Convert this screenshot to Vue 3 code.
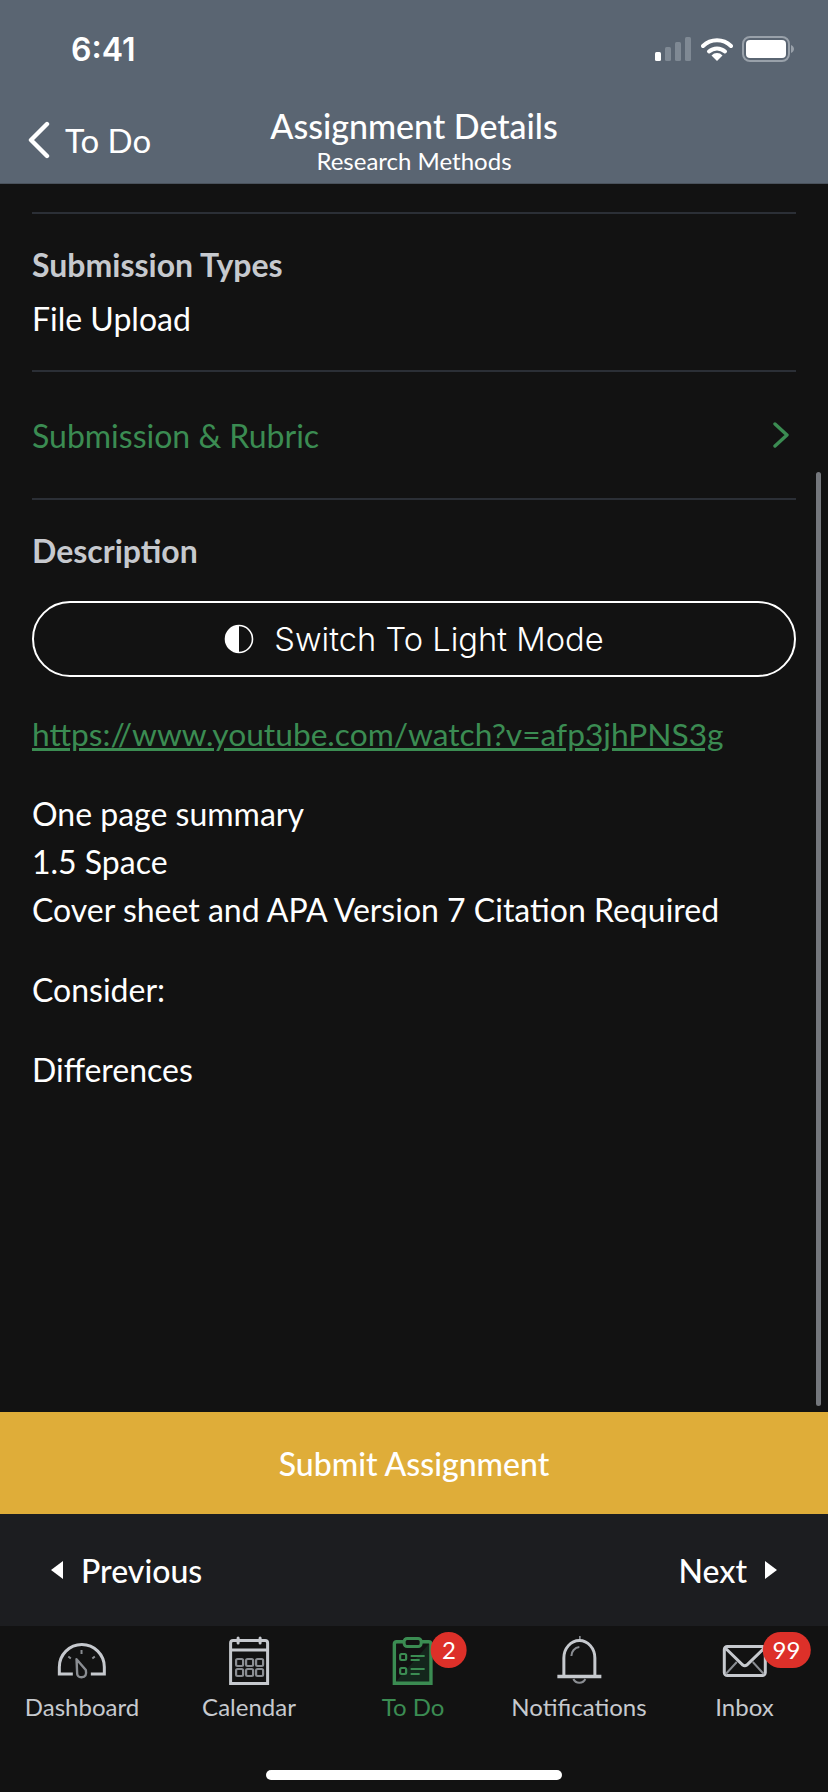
<template>
  <div class="screen">
    <header class="top">
      <div class="status">
        <span class="time">6:41</span>
        <div class="status-icons">
          <svg width="38" height="24" viewBox="0 0 38 24">
            <rect x="1" y="15" width="6" height="9" rx="1.5" fill="#fff"/>
            <rect x="11" y="10" width="6" height="14" rx="1.5" fill="#7f8994"/>
            <rect x="21" y="5" width="6" height="19" rx="1.5" fill="#7f8994"/>
            <rect x="31" y="0" width="6" height="24" rx="1.5" fill="#7f8994"/>
          </svg>
          <svg width="32" height="24" viewBox="0 0 32 24">
            <path d="M2 9 A20 20 0 0 1 30 9" fill="none" stroke="#fff" stroke-width="4" stroke-linecap="round"/>
            <path d="M8 14.5 A12 12 0 0 1 24 14.5" fill="none" stroke="#fff" stroke-width="4" stroke-linecap="round"/>
            <path d="M16 24 L10.5 18.5 A7.5 7.5 0 0 1 21.5 18.5 Z" fill="#fff"/>
          </svg>
          <svg width="52" height="26" viewBox="0 0 52 26">
            <rect x="1" y="1" width="46" height="24" rx="7" fill="none" stroke="#99a1aa" stroke-width="2"/>
            <rect x="4" y="4" width="40" height="18" rx="4" fill="#fff"/>
            <path d="M49 9 C51 10 52 11.5 52 13 C52 14.5 51 16 49 17 Z" fill="#99a1aa"/>
          </svg>
        </div>
      </div>
      <div class="nav">
        <div class="back">
          <svg width="24" height="38" viewBox="0 0 24 38">
            <path d="M21 3 L5 19 L21 35" fill="none" stroke="#fff" stroke-width="4.4" stroke-linecap="round" stroke-linejoin="round"/>
          </svg>
          <span>To Do</span>
        </div>
        <div class="title">
          <div class="title-main">Assignment Details</div>
          <div class="title-sub">Research Methods</div>
        </div>
      </div>
    </header>

    <main class="content">
      <div class="section types">
        <div class="label">Submission Types</div>
        <div class="value">File Upload</div>
      </div>
      <div class="rubric">
        <span>Submission &amp; Rubric</span>
        <svg width="18" height="26" viewBox="0 0 18 26">
          <path d="M3 2 L15 13 L3 24" fill="none" stroke="#3b8c52" stroke-width="3.4" stroke-linecap="round" stroke-linejoin="round"/>
        </svg>
      </div>
      <div class="description">
        <div class="label">Description</div>
        <div class="mode-btn">
          <svg width="30" height="30" viewBox="0 0 30 30">
            <circle cx="15" cy="15" r="13.5" fill="none" stroke="#fff" stroke-width="1.6"/>
            <path d="M15 1.5 A13.5 13.5 0 0 0 15 28.5 Z" fill="#fff"/>
          </svg>
          <span>Switch To Light Mode</span>
        </div>
        <a class="link">https://www.youtube.com/watch?v=afp3jhPNS3g</a>
        <p>One page summary<br>1.5 Space<br>Cover sheet and APA Version 7 Citation Required</p>
        <p>Consider:</p>
        <p>Differences</p>
      </div>
      <div class="scrollbar"></div>
    </main>

    <div class="submit">Submit Assignment</div>

    <div class="pager">
      <div class="pager-item">
        <svg width="14" height="20" viewBox="0 0 14 20"><path d="M13 1 V19 L1 10 Z" fill="#fff"/></svg>
        <span>Previous</span>
      </div>
      <div class="pager-item">
        <span>Next</span>
        <svg width="14" height="20" viewBox="0 0 14 20"><path d="M1 1 V19 L13 10 Z" fill="#fff"/></svg>
      </div>
    </div>

    <nav class="tabs">
      <div class="tab" v-for="tab in tabs" :key="tab.name" :class="{ active: tab.active }">
        <div class="tab-icon">
          <svg v-if="tab.name === 'Dashboard'" width="50" height="36" viewBox="0 0 50 36" fill="none">
            <path d="M16 31 H2.5 V24 A22.5 22.5 0 0 1 47.5 24 V31 H34" stroke="#c6c9ce" stroke-width="3"/>
            <path d="M24.7 7 V11 M11.5 13.5 L14 15.5 M38 13.5 L35.5 15.5" stroke="#8a8d92" stroke-width="2"/>
            <path d="M19.7 16.3 L29 27 Q30.5 34 24.7 34.3 Q20 34 20.3 29.7 Z" stroke="#8a8d92" stroke-width="2.4" stroke-linejoin="round"/>
          </svg>
          <svg v-else-if="tab.name === 'Calendar'" width="42" height="50" viewBox="0 0 42 50" fill="none">
            <path d="M2.5 47.5 V7 Q2.5 4.5 5 4.5 H37 Q39.5 4.5 39.5 7 V47.5 Z" stroke="#c6c9ce" stroke-width="3"/>
            <path d="M2.5 14 H39.5" stroke="#c6c9ce" stroke-width="3"/>
            <path d="M10 2 V7 M32 2 V7" stroke="#c6c9ce" stroke-width="3" stroke-linecap="round"/>
            <g stroke="#8a8d92" stroke-width="2.2">
              <rect x="8" y="23" width="7" height="7" rx="1.4"/>
              <rect x="18" y="23" width="7" height="7" rx="1.4"/>
              <rect x="28" y="23" width="7" height="7" rx="1.4"/>
              <rect x="8" y="33" width="7" height="7" rx="1.4"/>
              <rect x="18" y="33" width="7" height="7" rx="1.4"/>
              <rect x="28" y="33" width="7" height="7" rx="1.4"/>
            </g>
          </svg>
          <svg v-else-if="tab.name === 'To Do'" width="42" height="50" viewBox="0 0 42 50" fill="none">
            <path d="M39 6 L3 47 H39 Z" fill="#14261c"/>
            <path d="M12 5.7 H5 Q2.7 5.7 2.7 8 V47.3 H39.3 V8 Q39.3 5.7 37 5.7 H30" stroke="#3b8c52" stroke-width="3.4"/>
            <rect x="12.5" y="2.5" width="17" height="8" rx="3" fill="#121212" stroke="#3b8c52" stroke-width="3"/>
            <g stroke="#3b8c52" stroke-width="2.2">
              <rect x="8.5" y="18" width="6" height="6" rx="1.4"/>
              <rect x="8.5" y="32" width="6" height="6" rx="1.4"/>
              <path d="M19 20 H33 M19 24 H28 M19 33 H33 M19 38 H28"/>
            </g>
          </svg>
          <svg v-else-if="tab.name === 'Notifications'" width="46" height="50" viewBox="0 0 46 50" fill="none">
            <path d="M23.5 0 V4" stroke="#8a8d92" stroke-width="1.6"/>
            <path d="M7.5 40 V22 A15.5 17.5 0 0 1 38.5 22 V40" stroke="#c6c9ce" stroke-width="3"/>
            <path d="M1 40.5 H45" stroke="#c6c9ce" stroke-width="3.4"/>
            <path d="M15 20 A9 9 0 0 1 23 11" stroke="#8a8d92" stroke-width="2"/>
            <path d="M17 43 A6.5 6 0 0 0 29 43" stroke="#8a8d92" stroke-width="2"/>
          </svg>
          <svg v-else width="46" height="34" viewBox="0 0 46 34" fill="none">
            <rect x="2.5" y="2.5" width="41" height="29" rx="3" stroke="#c6c9ce" stroke-width="3"/>
            <path d="M4 4.5 L21 21 Q23 22.5 25 21 L42 4.5" stroke="#c6c9ce" stroke-width="3"/>
            <path d="M4 30 L15 18 M42 30 L31 18" stroke="#8a8d92" stroke-width="2"/>
          </svg>
          <span v-if="tab.badge" class="badge" :class="{ wide: tab.badge.length > 1 }">{{ tab.badge }}</span>
        </div>
        <span class="tab-name">{{ tab.name }}</span>
      </div>
      <div class="home-bar"></div>
    </nav>
  </div>
</template>

<script setup>
const tabs = [
  { name: 'Dashboard' },
  { name: 'Calendar' },
  { name: 'To Do', active: true, badge: '2' },
  { name: 'Notifications' },
  { name: 'Inbox', badge: '99' },
];
</script>

<style>
html, body { margin: 0; background: #121212; }
</style>

<style scoped>
.screen {
  display: flex;
  flex-direction: column;
  width: 828px;
  height: 1792px;
  overflow: hidden;
  background: #121212;
  color: #fff;
  font-family: Lato, "Liberation Sans", sans-serif;
}

/* top bar */
.top {
  flex: none;
  height: 184px;
  box-sizing: border-box;
  background: #5a6572;
  border-bottom: 1px solid #4a525c;
}
.status {
  display: flex;
  justify-content: space-between;
  align-items: center;
  height: 50px;
  padding: 24px 34px 0 71px;
}
.time {
  font-family: Inter, Roboto, sans-serif;
  font-size: 32px;
  font-weight: 600;
}
.status-icons {
  display: flex;
  align-items: center;
  gap: 9px;
}
.nav {
  position: relative;
  height: 109px;
}
.back {
  position: absolute;
  left: 26px;
  top: 46px;
  display: flex;
  align-items: center;
  gap: 15px;
  font-size: 33px;
  font-weight: 400;
}
.title {
  text-align: center;
  padding-top: 30px;
}
.title-main { font-size: 34px; line-height: 44px; font-weight: 500; }
.title-sub { font-size: 24px; line-height: 26px; }

/* scrolling content */
.content {
  position: relative;
  flex: 1;
  min-height: 0;
  padding: 28px 32px 0;
}
.section.types {
  border-top: 2px solid #2b2f36;
  border-bottom: 2px solid #2b2f36;
  height: 160px;
  box-sizing: border-box;
  padding-top: 31px;
}
.label {
  font-size: 32px;
  line-height: 40px;
  font-weight: 700;
  color: #c6c9ce;
}
.value {
  font-size: 32px;
  line-height: 40px;
  margin-top: 14px;
}
.rubric {
  display: flex;
  justify-content: space-between;
  align-items: center;
  height: 128px;
  box-sizing: border-box;
  padding-right: 6px;
  border-bottom: 2px solid #2b2f36;
  color: #3b8c52;
  font-size: 32px;
}
.description { padding-top: 31px; font-size: 32px; line-height: 48px; }
.description .label { line-height: 40px; }
.mode-btn {
  display: flex;
  justify-content: center;
  align-items: center;
  gap: 20px;
  height: 76px;
  box-sizing: border-box;
  margin-top: 30px;
  border: 2px solid #fff;
  border-radius: 38px;
  font-family: Inter, Roboto, sans-serif;
  font-size: 32.7px;
  font-weight: 300;
}
.link {
  display: block;
  margin-top: 33px;
  color: #3b8c52;
  font-size: 31.7px;
  text-decoration: underline;
}
.description p { margin: 32px 0 0; }
.scrollbar {
  position: absolute;
  right: 7px;
  top: 288px;
  width: 5px;
  height: 934px;
  border-radius: 3px;
  background: #74777c;
}

.submit {
  flex: none;
  display: flex;
  justify-content: center;
  align-items: center;
  height: 102px;
  background: #dfad39;
  font-size: 32px;
  font-weight: 500;
}

.pager {
  flex: none;
  display: flex;
  justify-content: space-between;
  align-items: center;
  height: 112px;
  padding: 0 50px;
  background: #1c1d20;
  font-size: 32px;
  font-weight: 500;
}
.pager-item {
  display: flex;
  align-items: center;
  gap: 17px;
}

/* tab bar */
.tabs {
  position: relative;
  flex: none;
  height: 166px;
  background: #121212;
}
.tab {
  position: absolute;
  top: 0;
  display: flex;
  flex-direction: column;
  align-items: center;
  transform: translateX(-50%);
  color: #c6c9ce;
  white-space: nowrap;
}
.tab:nth-child(1) { left: 82px; }
.tab:nth-child(2) { left: 249px; }
.tab:nth-child(3) { left: 413px; }
.tab:nth-child(4) { left: 579px; }
.tab:nth-child(5) { left: 744.5px; }
.tab.active { color: #3b8c52; }
.tab-icon {
  position: relative;
  display: flex;
  justify-content: center;
  align-items: center;
  height: 50px;
  margin-top: 10px;
}
.tab-name {
  margin-top: 4px;
  font-size: 24px;
  line-height: 34px;
}
.badge {
  position: absolute;
  top: -4px;
  left: calc(50% + 18px);
  min-width: 36px;
  height: 36px;
  line-height: 36px;
  text-align: center;
  border-radius: 18px;
  background: #dd3029;
  color: #fff;
  font-size: 24px;
}
.badge.wide { width: 48px; }
.home-bar {
  position: absolute;
  left: 266px;
  bottom: 12px;
  width: 296px;
  height: 10px;
  border-radius: 5px;
  background: #fff;
}
</style>
